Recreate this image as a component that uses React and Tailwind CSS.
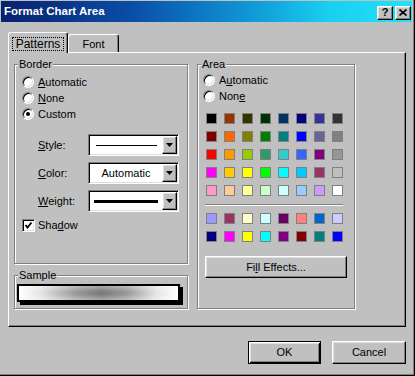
import React from 'react';

const palette = [
  '#000000', '#993300', '#333300', '#003300', '#003366', '#000080', '#333399', '#333333',
  '#800000', '#FF6600', '#808000', '#008000', '#008080', '#0000FF', '#666699', '#808080',
  '#FF0000', '#FF9900', '#99CC00', '#339966', '#33CCCC', '#3366FF', '#800080', '#969696',
  '#FF00FF', '#FFCC00', '#FFFF00', '#00FF00', '#00FFFF', '#00CCFF', '#993366', '#C0C0C0',
  '#FF99CC', '#FFCC99', '#FFFF99', '#CCFFCC', '#CCFFFF', '#99CCFF', '#CC99FF', '#FFFFFF',
];

const chartColors = [
  '#9999FF', '#993366', '#FFFFCC', '#CCFFFF', '#660066', '#FF8080', '#0066CC', '#CCCCFF',
  '#000080', '#FF00FF', '#FFFF00', '#00FFFF', '#800080', '#800000', '#008080', '#0000FF',
];

const raised =
  'border border-t-white border-l-white border-r-black border-b-black shadow-[inset_-1px_-1px_0_#808080,inset_1px_1px_0_#dfdfdf]';
const sunken =
  'border border-t-[#808080] border-l-[#808080] border-r-white border-b-white shadow-[inset_1px_1px_0_#000,inset_-1px_-1px_0_#dfdfdf] bg-white';
const etched = 'border border-[#808080] shadow-[1px_1px_0_#fff,inset_1px_1px_0_#fff] min-w-0';

const Radio = ({ checked, children }) => (
  <div className="h-[16px] flex items-center gap-[4px]">
    <div className={`w-[12px] h-[12px] rounded-full flex items-center justify-center ${sunken}`}>
      {checked && <div className="w-[4px] h-[4px] rounded-full bg-black" />}
    </div>
    <span>{children}</span>
  </div>
);

const Combo = ({ children }) => (
  <div className={`w-[91px] h-[22px] p-[1px] flex ${sunken}`}>
    <div className="flex-1 flex items-center justify-center">{children}</div>
    <div className={`w-[15px] flex items-center justify-center bg-[#c0c0c0] ${raised}`}>
      <svg width="7" height="4" viewBox="0 0 7 4">
        <polygon points="0,0 7,0 3.5,4" fill="#000" />
      </svg>
    </div>
  </div>
);

const FieldRow = ({ label, children, className = '' }) => (
  <div className={`h-[22px] flex items-center ${className}`}>
    <span className="ml-[16px] w-[50px]">{label}</span>
    <Combo>{children}</Combo>
  </div>
);

const Swatches = ({ colors }) => (
  <div className="grid grid-cols-8 gap-[7px] w-fit ml-[8px]">
    {colors.map((c, i) => (
      <div key={i} className="w-[11px] h-[11px] border border-[#808080]" style={{ backgroundColor: c }} />
    ))}
  </div>
);

export default function App() {
  return (
    <div className="w-[415px] h-[376px] bg-[#c0c0c0] border-r border-b border-black shadow-[inset_-1px_-1px_0_#808080] pt-[1px] pl-[1px] pr-[2px] flex flex-col text-[11px] leading-[13px] text-black font-['Liberation_Sans',Arial,sans-serif]">
      {/* Title bar */}
      <div className="h-[21px] flex items-center pl-[3px] pr-[1px] bg-[linear-gradient(to_right,#08206e_0%,#0a4ea6_32%,#1096d6_60%,#18d0f0_80%,#22e2f8_100%)]">
        <span className="flex-1 text-white font-bold text-[11.5px]">Format Chart Area</span>
        <div className={`w-[16px] h-[14px] mt-[2px] bg-[#c0c0c0] flex items-center justify-center font-bold text-[11px] ${raised}`}>?</div>
        <div className={`w-[16px] h-[14px] mt-[2px] ml-[2px] bg-[#c0c0c0] flex items-center justify-center ${raised}`}>
          <svg width="8" height="7" viewBox="0 0 8 7">
            <path d="M0.5 0.5 L7.5 6.5 M7.5 0.5 L0.5 6.5" stroke="#000" strokeWidth="1.6" />
          </svg>
        </div>
      </div>

      <div className="pl-[7px] pr-[6px]">
        {/* Tabs */}
        <div className="flex items-end mt-[10px] -mb-[1px] relative z-10">
          <div className="w-[60px] h-[21px] bg-[#c0c0c0] rounded-t-[3px] border-t border-l border-r border-t-white border-l-white border-r-black shadow-[inset_-1px_0_0_#808080] pl-[3px] pt-[4px]">
            <div className="w-[52px] h-[14px] border border-dotted border-black flex items-center justify-center text-[12px]">
              Patterns
            </div>
          </div>
          <div className="w-[51px] h-[18px] mb-[1px] rounded-t-[3px] border-t border-l border-r border-t-white border-l-white border-r-black shadow-[inset_-1px_0_0_#808080] flex justify-center pt-[3px]">
            Font
          </div>
        </div>

        {/* Panel */}
        <div className="h-[275px] border border-t-white border-l-white border-r-black border-b-black shadow-[inset_-1px_-1px_0_#808080] pl-[5px] pt-[5px] flex gap-[9px]">
          <div className="w-[174px] flex flex-col">
            <fieldset className={`h-[206px] ${etched}`}>
              <legend className="ml-[3px] px-[1px] bg-[#c0c0c0]">Border</legend>
              <div className="pt-[3px] pl-[7px]">
                <Radio><span className="underline">A</span>utomatic</Radio>
                <Radio><span className="underline">N</span>one</Radio>
                <Radio checked>Custom</Radio>
                <FieldRow label={<><span className="underline">S</span>tyle:</>} className="mt-[12px]">
                  <div className="w-[61px] h-[1px] bg-black" />
                </FieldRow>
                <FieldRow label={<><span className="underline">C</span>olor:</>} className="mt-[6px]">
                  Automatic
                </FieldRow>
                <FieldRow label={<><span className="underline">W</span>eight:</>} className="mt-[6px]">
                  <div className="w-[64px] h-[3px] bg-black" />
                </FieldRow>
                <div className="h-[16px] mt-[5px] flex items-center gap-[3px]">
                  <div className={`w-[13px] h-[13px] flex items-center justify-center ${sunken}`}>
                    <svg width="9" height="9" viewBox="0 0 9 9">
                      <polyline points="1.5,4 3.5,6.5 7.5,1.5" fill="none" stroke="#000" strokeWidth="1.8" />
                    </svg>
                  </div>
                  <span>Sha<span className="underline">d</span>ow</span>
                </div>
              </div>
            </fieldset>

            <fieldset className={`h-[40px] mt-[5px] ${etched}`}>
              <legend className="ml-[3px] px-[1px] bg-[#c0c0c0]">Sample</legend>
              <div className="pt-[2px] pl-[2px]">
                <div className="w-[163px] h-[18px] border-2 border-black shadow-[3px_3px_0_#000] bg-[image:linear-gradient(to_bottom,rgba(255,255,255,0.35),rgba(255,255,255,0)_40%,rgba(255,255,255,0)_60%,rgba(255,255,255,0.35)),linear-gradient(to_right,#fff_0%,#e4e4e4_14%,#9a9a9a_36%,#7a7a7a_52%,#9a9a9a_68%,#e4e4e4_86%,#fff_100%)]" />
              </div>
            </fieldset>
          </div>

          <fieldset className={`w-[158px] h-[251px] ${etched}`}>
            <legend className="ml-[3px] px-[1px] bg-[#c0c0c0]">Area</legend>
            <div className="pt-[1px] pl-[5px]">
              <Radio>A<span className="underline">u</span>tomatic</Radio>
              <Radio>Non<span className="underline">e</span></Radio>
            </div>
            <div className="mt-[9px]">
              <Swatches colors={palette} />
            </div>
            <div className="mt-[8px] ml-[7px] w-[138px] h-[2px] border-t border-b border-t-[#808080] border-b-white" />
            <div className="mt-[7px]">
              <Swatches colors={chartColors} />
            </div>
            <div className={`mt-[14px] ml-[7px] w-[142px] h-[22px] flex items-center justify-center ${raised}`}>
              Fi<span className="underline">l</span>l Effects...
            </div>
          </fieldset>
        </div>

        {/* Buttons */}
        <div className="flex justify-end gap-[11px] mt-[14px]">
          <div className="w-[73px] h-[23px] flex items-center justify-center border border-black shadow-[inset_1px_1px_0_#fff,inset_-1px_-1px_0_#000,inset_2px_2px_0_#dfdfdf,inset_-2px_-2px_0_#808080]">
            OK
          </div>
          <div className={`w-[74px] h-[23px] flex items-center justify-center ${raised}`}>Cancel</div>
        </div>
      </div>
    </div>
  );
}
